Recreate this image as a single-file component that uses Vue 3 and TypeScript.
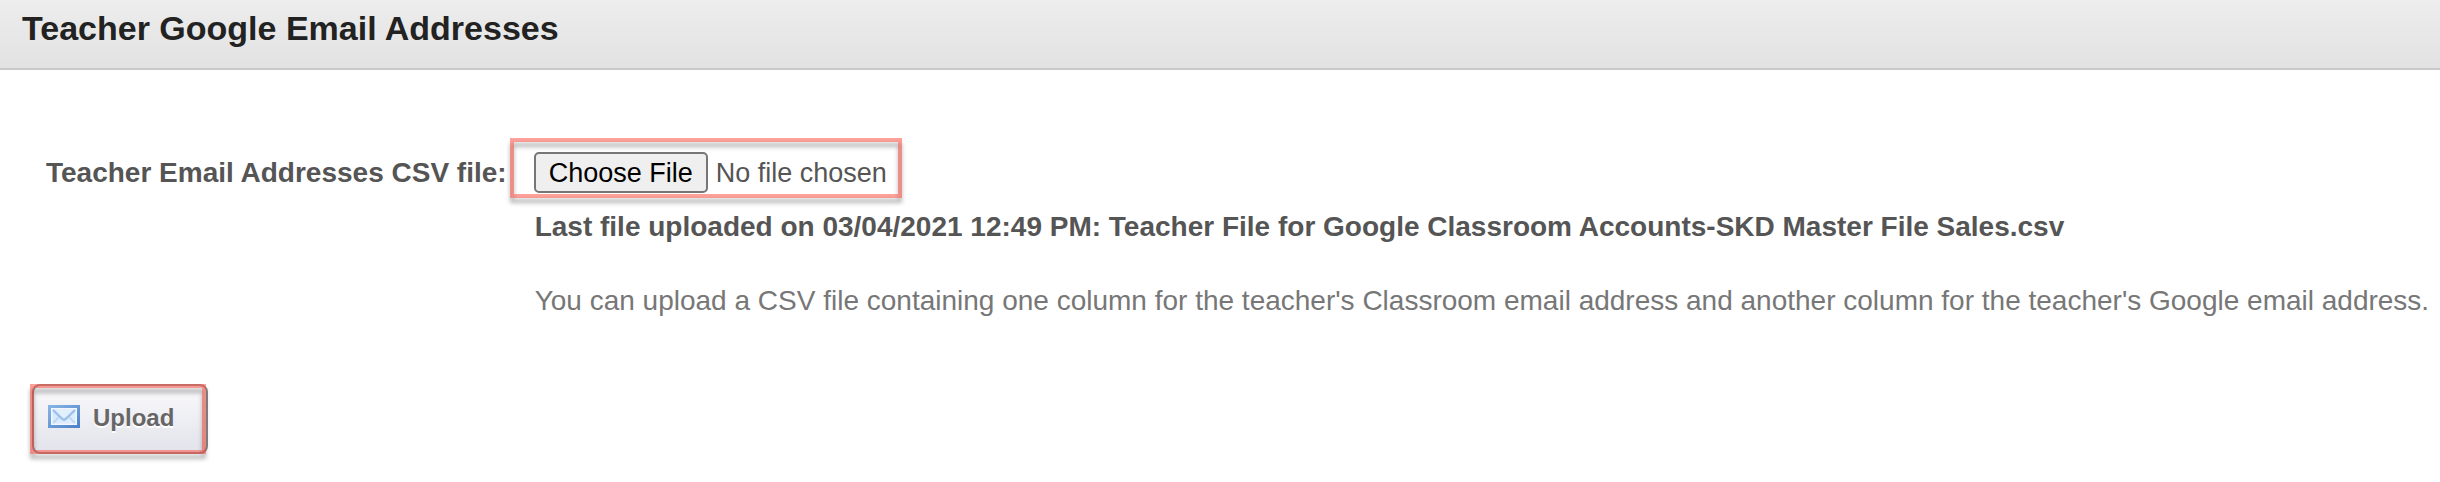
<script setup lang="ts">
import { ref } from 'vue'

const title = 'Teacher Google Email Addresses'
const lastUpload =
  'Last file uploaded on 03/04/2021 12:49 PM: Teacher File for Google Classroom Accounts-SKD Master File Sales.csv'
const help =
  "You can upload a CSV file containing one column for the teacher's Classroom email address and another column for the teacher's Google email address."

const selected = ref<File | null>(null)

function onPick(event: Event) {
  selected.value = (event.target as HTMLInputElement).files?.[0] ?? null
}
</script>

<template>
  <div class="page">
    <header class="bar">
      <h1>{{ title }}</h1>
    </header>
    <form class="form" @submit.prevent>
      <div class="field">
        <label for="csv">Teacher Email Addresses CSV file:</label>
        <div class="control">
          <div class="picker">
            <input id="csv" type="file" accept=".csv" @change="onPick" />
          </div>
          <p class="last">{{ lastUpload }}</p>
          <p class="help">{{ help }}</p>
        </div>
      </div>
      <div class="actions">
        <button type="submit" class="upload">
          <svg viewBox="0 0 32 23" width="32" height="23" aria-hidden="true">
            <defs>
              <linearGradient id="paper" x1="0" y1="0" x2="1" y2="1">
                <stop offset="0" stop-color="#d3e6fb" />
                <stop offset="1" stop-color="#e4effd" />
              </linearGradient>
              <linearGradient id="edge" x1="0" y1="0" x2="1" y2="1">
                <stop offset="0" stop-color="#86b3e4" />
                <stop offset="1" stop-color="#4f82c9" />
              </linearGradient>
            </defs>
            <rect x="1.5" y="1.5" width="29" height="20" fill="url(#paper)" stroke="url(#edge)" stroke-width="3" />
            <rect x="3.7" y="3.7" width="24.6" height="15.6" fill="none" stroke="#f2f8ff" stroke-width="1.4" />
            <path d="M5 18 11.5 11.5M27 18 20.5 11.5" fill="none" stroke="#c0d8f5" stroke-width="2" />
            <path d="M5 5 14.5 14Q16 15.3 17.5 14L27 5Z" fill="#e3effd" />
            <path d="M5 5 14.5 14Q16 15.3 17.5 14L27 5" fill="none" stroke="#9cc0ec" stroke-width="2.4" />
          </svg>
          <span>Upload</span>
        </button>
      </div>
    </form>
  </div>
</template>

<style>
body {
  margin: 0;
  background: #fff;
}
</style>

<style scoped>
.page {
  font-family: "Liberation Sans", Arial, Helvetica, sans-serif;
  font-size: 28px;
  line-height: 32px;
  color: #555;
}

.bar {
  padding: 8px 22px 20px;
  background: linear-gradient(#ededed, #e2e2e2);
  border-bottom: 2px solid #c9c9c9;
}

h1 {
  margin: 0;
  font-size: 34px;
  line-height: 40px;
  color: #222;
}

.form {
  padding: 68px 0 24px 30px;
}

.field {
  display: flex;
  align-items: flex-start;
  gap: 3px;
  padding-left: 16px;
}

label {
  flex: none;
  padding-top: 19px;
  font-weight: bold;
}

.control {
  flex: 1;
  min-width: 0;
}

.picker {
  position: relative;
  box-sizing: border-box;
  width: 392px;
  height: 60px;
  padding: 14px 4px 0 24px;
}

/* Translucent red highlight frame with a soft shadow below each edge */
.picker::after,
.upload::after {
  content: "";
  position: absolute;
  inset: 0;
  box-sizing: border-box;
  border: 4px solid rgba(255, 84, 72, 0.55);
  filter: drop-shadow(0 5px 2px rgba(0, 0, 0, 0.5));
  pointer-events: none;
}

input {
  display: block;
  width: 100%;
  font-family: inherit;
  font-size: 27px;
  line-height: 36px;
  color: #555;
}

input::file-selector-button {
  box-sizing: border-box;
  height: 41px;
  margin: 0 8px 0 0;
  padding: 1px 13px 0;
  font: inherit;
  color: #000;
  background: #efefef;
  border: 2px solid #767676;
  border-radius: 5px;
}

p {
  margin: 0;
  padding-left: 25px;
}

.last {
  margin-top: 13px;
  font-weight: bold;
}

.help {
  margin-top: 42px;
  color: #777;
}

.actions {
  margin-top: 67px;
  padding-left: 2px;
}

.upload {
  position: relative;
  box-sizing: border-box;
  display: flex;
  align-items: flex-start;
  gap: 13px;
  width: 176px;
  height: 70px;
  padding: 19px 14px 0;
  font-family: inherit;
  font-size: 24px;
  line-height: 26px;
  font-weight: bold;
  color: #666;
  text-shadow: 0 2px 0 #fff;
  background: linear-gradient(#fafafc, #e2e3eb);
  border: 2px solid #888;
  border-radius: 8px;
}

.upload::after {
  inset: -2px 0 -2px -4px;
}
</style>
